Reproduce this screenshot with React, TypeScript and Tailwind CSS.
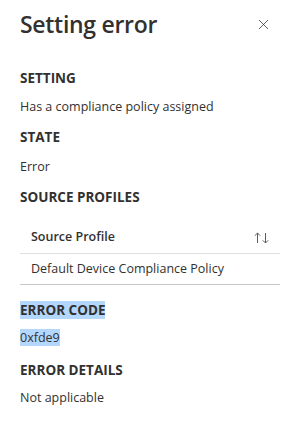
import { X } from 'lucide-react';

const font = { fontFamily: '"Open Sans", "Liberation Sans", sans-serif' };

function Label({ children, selected }: { children: string; selected?: boolean }) {
  return (
    <div className="text-[13.5px] font-bold leading-[19px] text-[#323130]">
      <span className={selected ? 'bg-[#b4d7fe]' : ''}>{children}</span>
    </div>
  );
}

function Value({ children, selected }: { children: string; selected?: boolean }) {
  return (
    <div className="text-[12.5px] leading-[16px] text-[#323130]">
      <span className={selected ? 'bg-[#b4d7fe]' : ''}>{children}</span>
    </div>
  );
}

function SortIcon() {
  return (
    <svg width="16" height="12" viewBox="0 0 16 12" fill="none" stroke="#605e5c" strokeWidth="1">
      <path d="M3.5 11V1M0.8 3.7L3.5 1L6.2 3.7" />
      <path d="M11.5 1V11M8.8 8.3L11.5 11L14.2 8.3" />
    </svg>
  );
}

export default function App() {
  return (
    <div className="w-[295px] h-[439px] bg-white overflow-hidden" style={font}>
      {/* Header */}
      <div className="flex items-center justify-between pl-5 pr-[23px] pt-[8px]">
        <h1 className="text-[23px] font-semibold leading-[32px] text-[#323130] tracking-[-0.3px]">Setting error</h1>
        <X className="w-[17px] h-[17px] text-[#323130]" strokeWidth={1.1} />
      </div>

      <div className="pl-5 pr-[15px]">
        <div className="mt-[29px]">
          <Label>SETTING</Label>
        </div>
        <div className="mt-[11px]">
          <Value>Has a compliance policy assigned</Value>
        </div>

        <div className="mt-[13px]">
          <Label>STATE</Label>
        </div>
        <div className="mt-[12px]">
          <Value>Error</Value>
        </div>

        <div className="mt-[13px]">
          <Label>SOURCE PROFILES</Label>
        </div>

        {/* Table */}
        <div className="mt-[15px] text-[12.5px] text-[#323130]">
          <div className="flex items-center justify-between h-[32px] pl-[11px] pr-[10px] border-b border-[#e1dfdd]">
            <span className="font-semibold">Source Profile</span>
            <SortIcon />
          </div>
          <div className="flex items-center h-[31px] pl-[11px] border-b border-[#c8c6c4]">
            <span>Default Device Compliance Policy</span>
          </div>
        </div>

        <div className="mt-[16px]">
          <Label selected>ERROR CODE</Label>
        </div>
        <div className="mt-[10px]">
          <Value selected>0xfde9</Value>
        </div>

        <div className="mt-[15px]">
          <Label>ERROR DETAILS</Label>
        </div>
        <div className="mt-[10px]">
          <Value>Not applicable</Value>
        </div>
      </div>
    </div>
  );
}
